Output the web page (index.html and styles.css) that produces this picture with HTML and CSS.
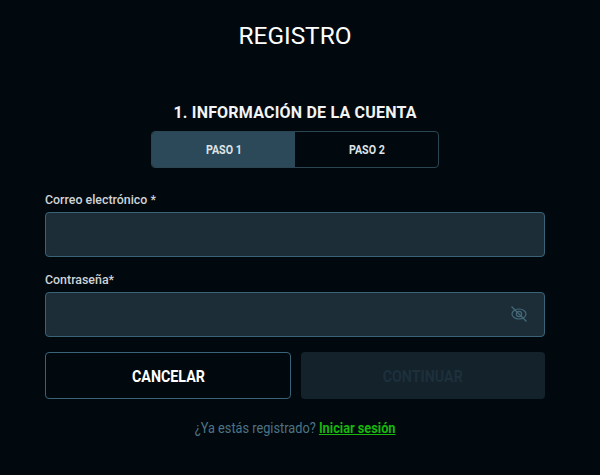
FILE: index.html
```html
<!DOCTYPE html>
<html lang="es">
<head>
    <meta charset="UTF-8">
    <meta name="viewport" content="width=device-width, initial-scale=1.0">
    <title>Registro</title>
    <link rel="stylesheet" href="styles.css">
</head>
<body>
    <main class="page">
        <h1 class="title">REGISTRO</h1>
        <h2 class="step-title">1. INFORMACIÓN DE LA CUENTA</h2>

        <div class="steps">
            <div class="step step-active"><span class="narrow">PASO 1</span></div>
            <div class="step"><span class="narrow">PASO 2</span></div>
        </div>

        <form class="form">
            <div class="form-group">
                <label for="email">Correo electrónico *</label>
                <input id="email" type="email">
            </div>
            <div class="form-group">
                <label for="password">Contraseña*</label>
                <div class="input-wrap">
                    <input id="password" type="password">
                    <svg class="eye" width="18" height="18" viewBox="0 0 18 18" fill="none" stroke="currentColor" stroke-width="1.2">
                        <ellipse cx="9" cy="9" rx="7" ry="5"/>
                        <circle cx="9" cy="9" r="2.6"/>
                        <path d="M1.5 1.5 16.5 16.5"/>
                    </svg>
                </div>
            </div>
            <div class="buttons">
                <button type="button" class="btn btn-outline"><span class="narrow narrow-btn">CANCELAR</span></button>
                <button type="button" class="btn btn-disabled"><span class="narrow narrow-btn">CONTINUAR</span></button>
            </div>
        </form>

        <p class="login"><span class="narrow narrow-login">¿Ya estás registrado? <a href="#">Iniciar sesión</a></span></p>
    </main>
</body>
</html>
```

FILE: styles.css
```css
* { box-sizing: border-box; }
html, body { height: 100%; }
body { margin: 0; background: #01090e; color: #fff; font-family: Roboto, Arial, sans-serif; overflow: hidden; }
.page { display: flex; flex-direction: column; align-items: center; padding: 21px 55px 0 45px; }
.title { margin: 0; font-size: 24.4px; line-height: 30px; font-weight: 400; }
.step-title { margin: 50px 0 0 0; font-size: 16px; line-height: 24px; font-weight: 700; color: #f2f4f5; letter-spacing: 0.2px; }
.steps { display: flex; width: 288px; height: 37px; margin-top: 6px; border: 1px solid #2b4552; border-radius: 4px; overflow: hidden; }
.step { flex: 1; display: flex; align-items: center; justify-content: center; font-size: 13px; font-weight: 700; color: #dfe3e6; }
.step-active { background: #2b4958; }
.narrow { display: inline-block; transform: scaleX(0.82); white-space: nowrap; }
.narrow-btn { transform: scaleX(0.84); }
.narrow-login { transform: scaleX(0.85); }
.form { width: 100%; margin-top: 23px; }
.form-group { margin-bottom: 14px; }
label { display: block; margin-bottom: 3px; font-size: 12.4px; line-height: 18px; font-weight: 500; color: #d0d3d6; }
input { display: block; width: 100%; height: 45px; padding: 0 40px 0 12px; background: #1c2d38; border: 1px solid #3a6378; border-radius: 4px; color: #fff; outline: none; }
.input-wrap { position: relative; }
.eye { position: absolute; right: 17px; top: 13px; color: #456878; }
.buttons { display: flex; gap: 10px; margin-top: 15px; }
.btn { flex: 1; height: 47px; border-radius: 4px; font-family: inherit; font-size: 17px; font-weight: 700; padding: 0; }
.btn-outline { background: #01090e; border: 1px solid #3a6378; color: #fff; }
.btn-disabled { background: #14222b; border: none; color: #1d303c; }
.login { margin: 19px 0 0 0; font-size: 15px; line-height: 20px; color: #4d7486; }
.login a { color: #18b80c; font-weight: 700; }
```
